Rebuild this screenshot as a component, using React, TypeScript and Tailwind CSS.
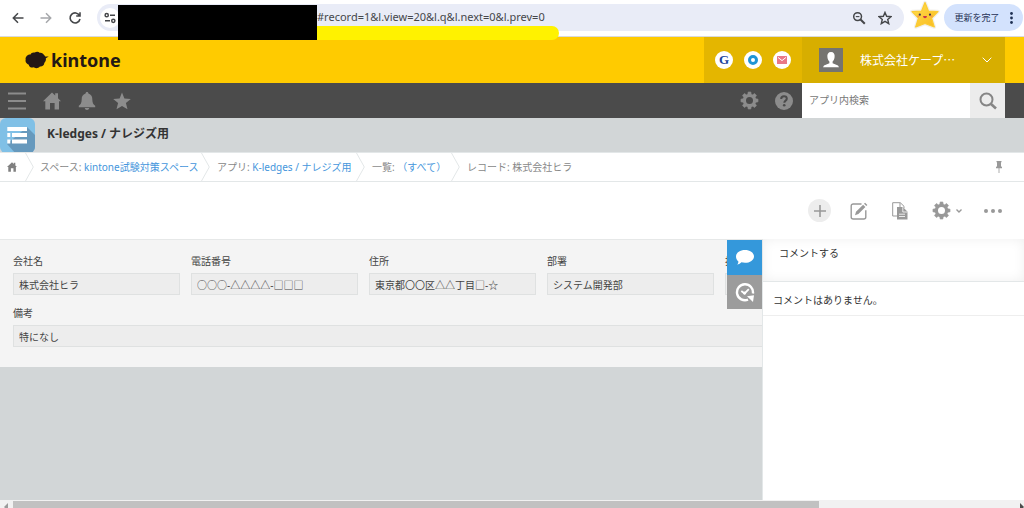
import React from "react";

type IconProps = { className?: string };

const HomeIcon = ({ className }: IconProps) => (
  <svg viewBox="0 0 18 18" className={className} fill="currentColor" aria-hidden="true">
    <path d="M9 .6 12.200 3.600V1.200h2.800v5L18 9.200h-2V17.500h-4.400v-6.400H7V17.500H2.300V9.200H0z" />
  </svg>
);

const GearIcon = ({ className }: IconProps) => (
  <svg viewBox="0 0 20 20" className={className} fill="none" stroke="currentColor" aria-hidden="true">
    <circle cx="10" cy="10" r="5.300" strokeWidth="3.200" />
    {[0, 45, 90, 135, 180, 225, 270, 315].map((a) => (
      <path key={a} d="M8 4.200 8.600 1h2.800l.6 3.200z" fill="currentColor" strokeWidth="0.600" transform={`rotate(${a} 10 10)`} />
    ))}
  </svg>
);

const StarShape = ({ className }: IconProps) => (
  <svg viewBox="0 0 18 18" className={className} fill="currentColor" aria-hidden="true">
    <path d="M9 .5 11.400 6.500 17.800 7 12.900 11.100 14.500 17.300 9 13.900 3.500 17.300 5.100 11.100.2 7 6.600 6.500z" />
  </svg>
);

const AppIcon = () => (
  <svg viewBox="0 0 35 35" className="size-[35px] shrink-0" aria-hidden="true">
    <defs>
      <clipPath id="appTile">
        <rect width="35" height="35" rx="6" />
      </clipPath>
    </defs>
    <g clipPath="url(#appTile)">
      <rect width="35" height="35" fill="#80c0e6" />
      <path d="M27 9 37 19V36H16L7 26z" fill="#6699bd" />
    </g>
    <g fill="#fff">
      <path d="M7.300 9h19.700v4H7.300zM7.300 15h3v4h-3zM12 15H27v4H12zM7.300 21.500h3v4h-3zM12 21.500H27v4H12z" />
    </g>
  </svg>
);

const ChevronDivider = () => (
  <svg viewBox="0 0 9 28" className="h-7 w-[9px] shrink-0" fill="none" stroke="#e3e7e8" aria-hidden="true">
    <path d="M.5 0 8.300 14 .5 28" />
  </svg>
);

const starPath = "M15 2.500 18.400 11 28 11.600 21.600 18.200 24.300 27 15 23.500 5.700 27 8.400 18.200 2 11.600 11.600 11z";

const SmilingStar = () => (
  <svg viewBox="0 0 30 30" className="size-[30px]" aria-hidden="true">
    <defs>
      <linearGradient id="starFill" x1="0" y1="0" x2="1" y2="1">
        <stop offset="0" stopColor="#ffe052" />
        <stop offset="1" stopColor="#f9b91c" />
      </linearGradient>
    </defs>
    <path d={starPath} fill="none" stroke="#f2f0ec" strokeWidth="3.500" strokeLinejoin="round" />
    <path d={starPath} fill="url(#starFill)" stroke="#fbcb32" strokeWidth="1.200" strokeLinejoin="round" />
    <circle cx="9.800" cy="14.700" r="1.100" fill="#3d3350" />
    <circle cx="20" cy="14.700" r="1.100" fill="#3d3350" />
    <path d="M13 16h4q-.3 2.200-2 2.200T13 16z" fill="#c9354a" />
    <circle cx="8.300" cy="16.300" r="1.100" fill="#f79a4e" />
    <circle cx="21.600" cy="16.300" r="1.100" fill="#f79a4e" />
  </svg>
);

function BrowserBar() {
  return (
    <div className="relative flex h-[37px] items-start border-b border-[#d9dadc] bg-white pt-1 text-[#45474a]">
      <div className="flex h-[27px] w-[97px] shrink-0 items-center gap-4 pl-3">
        <button aria-label="戻る">
          <svg viewBox="0 0 12 12" className="size-3" fill="none" stroke="currentColor" strokeWidth="1.500">
            <path d="M11.500 6H1.500M6 1.300 1.300 6 6 10.700" />
          </svg>
        </button>
        <button aria-label="進む" className="text-[#a5a7aa]">
          <svg viewBox="0 0 12 12" className="size-3" fill="none" stroke="currentColor" strokeWidth="1.500">
            <path d="M.5 6h10M6 1.300 10.700 6 6 10.700" />
          </svg>
        </button>
        <button aria-label="再読み込み">
          <svg viewBox="0 0 14 14" className="size-[14px]" fill="none" stroke="currentColor" strokeWidth="1.600">
            <path d="M11.500 4.500A5 5 0 1 0 12 8M12 1.300V5H8.200" />
          </svg>
        </button>
      </div>
      <div className="flex h-[27px] grow items-center rounded-full bg-[#e9ecf7] px-[3px]">
        <button aria-label="サイト情報" className="flex size-5 shrink-0 items-center justify-center rounded-full bg-white">
          <svg viewBox="0 0 12 12" className="size-3" fill="none" stroke="currentColor" strokeWidth="1.500">
            <circle cx="2.700" cy="3.200" r="1.600" />
            <path d="M6 3.200h5M1 8.800h5" />
            <circle cx="9.300" cy="8.800" r="1.600" />
          </svg>
        </button>
        <input
          aria-label="アドレス"
          readOnly
          className="ml-[197px] min-w-0 grow bg-transparent text-[11px] outline-none"
          value="#record=1&l.view=20&l.q&l.next=0&l.prev=0"
        />
        <button aria-label="ズーム" className="mr-3">
          <svg viewBox="0 0 14 14" className="size-[14px]" fill="none" stroke="currentColor" strokeWidth="1.500">
            <circle cx="5.600" cy="5.600" r="3.900" />
            <path d="m8.500 8.500 4.300 4.300" strokeWidth="2" />
            <path d="M3.800 5.600h3.600" strokeWidth="1.100" />
          </svg>
        </button>
        <button aria-label="ブックマーク" className="mr-[9px]">
          <svg viewBox="0 0 18 18" className="size-[14px]" fill="none" stroke="currentColor" strokeWidth="1.800">
            <path d="M9 1.800 11.100 6.800 16.700 7.300 12.500 10.900 13.800 16.300 9 13.400 4.200 16.300 5.500 10.900 1.300 7.300 6.900 6.800z" />
          </svg>
        </button>
      </div>
      <div className="-mt-1 ml-[6px] mr-1 shrink-0">
        <SmilingStar />
      </div>
      <button className="mr-px flex h-[27px] w-[79px] shrink-0 items-center justify-center gap-[10px] rounded-full bg-[#d3e2fd] text-[9px] text-[#1f3054]">
        更新を完了
        <svg viewBox="0 0 3 12" className="h-3 w-[3px]" fill="currentColor" aria-hidden="true">
          <circle cx="1.500" cy="1.500" r="1.400" />
          <circle cx="1.500" cy="6" r="1.400" />
          <circle cx="1.500" cy="10.500" r="1.400" />
        </svg>
      </button>
      <div className="absolute left-[118px] top-[26px] z-10 h-[14px] w-[441px] rounded-full bg-[#fff200]" />
      <div className="absolute left-[118px] top-[5px] z-10 h-[35px] w-[199px] bg-black" />
    </div>
  );
}

function BrandHeader() {
  return (
    <header className="flex h-[46px] items-stretch bg-[#ffcb00] pr-[19px]">
      <a href="#" className="flex grow items-center pl-[25px] text-[#231815]">
        <svg viewBox="0 0 24 18" className="h-[18px] w-6" fill="currentColor" aria-hidden="true">
          <path d="M5.500 3.500C6 1.700 8.200 1 9.800 1.600c1.500-1.200 3.800-1 4.800.2 1.900-.4 3.900.5 4.400 2.300.5.300.8.800 1.100 1.300l3.700.1-3 1.700c.4 1.900-.2 3.600-1.500 4.700.1 2.400-2.300 4-4.400 3.600-1.500 1.900-4.700 2.100-6.400.8-2.100.9-4.500-.4-4.700-2.600C1.400 13 0 10.800.7 8.800-.1 6.100 2.600 3.300 5.500 3.500z" />
        </svg>
        <span className="ml-[2px] text-[18px] font-bold leading-6">kintone</span>
      </a>
      <nav className="flex w-[98px] items-center gap-[11px] bg-[#e4b600] pl-[11px]" aria-label="サービス">
        <a href="#" aria-label="Garoon" className="flex size-[18px] items-center justify-center rounded-full bg-white font-['Liberation_Serif',serif] text-[13px] font-bold text-[#21439c]">
          G
        </a>
        <a href="#" aria-label="Office" className="flex size-[18px] items-center justify-center rounded-full bg-white">
          <span className="size-[10px] rounded-full border-3 border-[#1f95d6]" />
        </a>
        <a href="#" aria-label="メールワイズ" className="flex size-[18px] items-center justify-center rounded-full bg-white">
          <svg viewBox="0 0 10 8" className="h-2 w-[10px]">
            <rect width="10" height="8" rx="0.500" fill="#e97886" />
            <path d="m1 1.400 4 3.200 4-3.200" fill="none" stroke="#fff" />
          </svg>
        </a>
      </nav>
      <button className="flex w-[203px] items-center bg-[#d7ae00] pl-[17px] text-xs text-white">
        <svg viewBox="0 0 24 24" className="size-6">
          <rect width="24" height="24" fill="#757470" />
          <path d="M12 4c-2.700 0-4 2-3.600 5 .2 2.200 1 3.700 2 4.600v1.600L5 17.400 4 19.300h16l-1-1.900-5.400-2.200v-1.600c1-.9 1.800-2.400 2-4.600.4-3-.9-5-3.600-5z" fill="#fff" />
        </svg>
        <span className="ml-[17px] whitespace-nowrap font-['Noto_Sans_CJK_JP',sans-serif]">株式会社ケープ…</span>
        <svg viewBox="0 0 10 6" className="ml-auto mr-[13px] h-[6px] w-[10px]" fill="none" stroke="currentColor">
          <path d="m.7.7 4.300 4.300L9.300.7" />
        </svg>
      </button>
    </header>
  );
}

function GlobalNav() {
  return (
    <nav className="flex h-[35px] items-stretch bg-[#4b4b4b] pr-[19px] text-[#8c8c8c]" aria-label="グローバル">
      <div className="flex grow items-center gap-[17px] pl-2">
        <button aria-label="メニュー">
          <svg viewBox="0 0 18 18" className="size-[18px]" stroke="currentColor" strokeWidth="2">
            <path d="M0 1.500h18M0 9h18M0 16.500h18" />
          </svg>
        </button>
        <button aria-label="ポータル">
          <HomeIcon className="size-[18px]" />
        </button>
        <button aria-label="通知">
          <svg viewBox="0 0 18 18" className="size-[18px]" fill="currentColor">
            <path d="M9 0c-1 0-1.400.7-1.400 1.600C4.700 2.500 3.700 4.700 3.700 7.300c0 3.600-1.100 5.300-2.900 6.400v1.600h16.400v-1.600c-1.800-1.100-2.900-2.800-2.900-6.400 0-2.600-1-4.800-3.900-5.700C10.400.7 10 0 9 0zM6.700 16c.3 1.300 1.100 2 2.300 2s2-.7 2.300-2z" />
          </svg>
        </button>
        <button aria-label="ブックマーク一覧">
          <StarShape className="size-[18px]" />
        </button>
      </div>
      <div className="flex items-center gap-4 pr-[9px]">
        <button aria-label="設定">
          <GearIcon className="size-[19px]" />
        </button>
        <button aria-label="ヘルプ">
          <svg viewBox="0 0 18 18" className="size-[18px]">
            <circle cx="9" cy="9" r="9" fill="currentColor" />
            <path d="M6.200 7c0-1.700 1.100-2.700 2.800-2.700s2.800 1 2.800 2.400c0 1.900-2.500 2-2.500 4" fill="none" stroke="#4b4b4b" strokeWidth="2" />
            <circle cx="9.200" cy="13.300" r="1.300" fill="#4b4b4b" />
          </svg>
        </button>
      </div>
      <div className="flex w-[203px] bg-white">
        <input
          aria-label="アプリ内検索"
          placeholder="アプリ内検索"
          className="min-w-0 grow px-[7px] text-[10px] placeholder:text-[#777] outline-none"
        />
        <button aria-label="検索" className="flex w-[35px] shrink-0 items-center justify-center bg-[#ececec] text-[#858585]">
          <svg viewBox="0 0 18 18" className="size-[18px]" fill="none" stroke="currentColor" strokeWidth="2">
            <circle cx="7.500" cy="7.500" r="6" />
            <path d="m12 12 5 4.500" strokeWidth="2.600" />
          </svg>
        </button>
      </div>
    </nav>
  );
}

function Breadcrumbs() {
  return (
    <nav className="flex h-[30px] items-center border-y border-[#e3e7e8] bg-white text-[10px] text-[#888]" aria-label="パンくず">
      <a href="#" aria-label="ポータル" className="w-[25px] shrink-0 pl-[7px] text-[#808080]">
        <HomeIcon className="size-[10px]" />
      </a>
      <ChevronDivider />
      <span className="w-[167px] shrink-0 whitespace-nowrap pl-[6px]">
        スペース: <a href="#" className="text-[#4596dc]">kintone試験対策スペース</a>
      </span>
      <ChevronDivider />
      <span className="w-[146px] shrink-0 whitespace-nowrap pl-[7px]">
        アプリ: <a href="#" className="text-[#4596dc]">K-ledges / ナレジズ用</a>
      </span>
      <ChevronDivider />
      <span className="w-[86px] shrink-0 whitespace-nowrap pl-[7px]">
        一覧: <a href="#" className="text-[#4596dc]">（すべて）</a>
      </span>
      <ChevronDivider />
      <span className="grow pl-[7px]">レコード: 株式会社ヒラ</span>
      <button aria-label="固定" className="mr-[22px] text-[#999]">
        <svg viewBox="0 0 6 12" className="h-3 w-[6px]" fill="currentColor">
          <path d="M.5 0h5v1.200H5V5.300l1 .6v1.400H3.400V12h-.8V7.300H0V5.900l1-.6V1.200H.5z" />
        </svg>
      </button>
    </nav>
  );
}

function RecordToolbar() {
  return (
    <div className="flex h-[57px] items-center justify-end pr-[22px] text-[#999]">
      <button aria-label="レコードを追加" className="mr-[19px] flex size-[23px] items-center justify-center rounded-full bg-[#ededed]">
        <svg viewBox="0 0 12 12" className="size-3" stroke="currentColor" strokeWidth="1.600">
          <path d="M6 0v12M0 6h12" />
        </svg>
      </button>
      <button aria-label="編集" className="mr-6">
        <svg viewBox="0 0 18 18" className="size-[18px]" fill="none" stroke="currentColor" strokeWidth="1.400">
          <path d="M11.500 2H3.200A2 2 0 0 0 1.200 4v11a2 2 0 0 0 2 2h10.600a2 2 0 0 0 2-2V8.300" />
          <path d="M5 13.200 6 9.800 13.100 2.700l2.300 2.200-7 7.100zM14 1.800l1.100-1.100 2.300 2.200L16.300 4z" fill="currentColor" stroke="none" />
        </svg>
      </button>
      <button aria-label="再利用" className="mr-6">
        <svg viewBox="0 0 16 18" className="h-[18px] w-4">
          <path d="M5 14H.7V.7h7.600L12 4.300V6M8 1v4" fill="none" stroke="currentColor" />
          <path d="M5 5h6l4.500 4.700V17.500H5z" fill="currentColor" />
          <path d="M10.800 5.200V10h4.500M7 12.200h6M7 14.500h6" fill="none" stroke="#fff" strokeWidth="0.800" />
        </svg>
      </button>
      <button aria-label="アプリの設定" className="mr-[22px] flex items-center gap-[5px]">
        <GearIcon className="size-[19px]" />
        <svg viewBox="0 0 6 4" className="h-1 w-[6px]" fill="none" stroke="currentColor" strokeWidth="1.400">
          <path d="m.5.5 2.500 2.500L5.500.5" />
        </svg>
      </button>
      <button aria-label="その他">
        <svg viewBox="0 0 18 4" className="h-1 w-[18px]" fill="currentColor">
          <circle cx="2" cy="2" r="2" />
          <circle cx="9" cy="2" r="2" />
          <circle cx="16" cy="2" r="2" />
        </svg>
      </button>
    </div>
  );
}

function Field({ id, label, value, wide }: { id: string; label: string; value: string; wide?: boolean }) {
  return (
    <div className={wide ? "w-[900px]" : "w-[167px] shrink-0"}>
      <label htmlFor={id} className="block h-5 text-[10px] leading-4">
        {label}
      </label>
      <input
        id={id}
        readOnly
        value={value}
        className="block h-[22px] w-full border border-[#dfe1e1] bg-[#ededed] px-[5px] text-[10px] outline-none"
      />
    </div>
  );
}

const fields = [
  { id: "company", label: "会社名", value: "株式会社ヒラ" },
  { id: "phone", label: "電話番号", value: "○○○-△△△△-□□□" },
  { id: "address", label: "住所", value: "東京都〇〇区△△丁目□-☆" },
  { id: "department", label: "部署", value: "システム開発部" },
  { id: "person", label: "担当者", value: "" },
];

function RecordBody() {
  return (
    <main className="flex grow">
      <div className="relative min-w-0 grow bg-[#d2d6d7]">
        <div className="h-[128px] overflow-hidden border-t border-[#e6e8e8] bg-[#f4f4f4] pl-[13px] pt-[13px] text-[#444]">
          <div className="mb-[10px] flex gap-[11px]">
            {fields.map((f) => (
              <Field key={f.id} {...f} />
            ))}
          </div>
          <Field id="notes" label="備考" value="特になし" wide />
        </div>
        <div className="absolute right-0 top-px w-[35px] text-white">
          <button aria-label="コメント" className="flex h-[35px] w-full items-center justify-center bg-[#3498db]">
            <svg viewBox="0 0 18 15" className="h-[15px] w-[18px]" fill="currentColor">
              <path d="M9 0c5 0 9 2.800 9 6.400s-4 6.400-9 6.400c-1.300 0-2.500-.2-3.600-.5C4.400 13.500 3 14.300 1 14.500c1-.9 1.400-1.900 1.400-3.100C.9 10.200 0 8.400 0 6.400 0 2.800 4 0 9 0z" />
            </svg>
          </button>
          <button aria-label="変更履歴" className="flex h-[34px] w-full items-center justify-center bg-[#9c9c9c]">
            <svg viewBox="0 0 20 20" className="size-5" fill="none" stroke="currentColor" strokeWidth="2.400">
              <path d="M17.900 11.500A8 8 0 1 0 13 17.700" />
              <path d="m6.300 9 3.300 2.500 4.200-4.300" strokeWidth="1.800" />
              <circle cx="9.600" cy="11" r="1.600" fill="currentColor" stroke="none" />
              <path d="M12 14.200 19 13.200 18 20z" fill="currentColor" stroke="none" />
            </svg>
          </button>
        </div>
      </div>
      <aside className="w-[262px] shrink-0 border-l border-[#e3e7e8] bg-white text-[10px] text-[#333]">
        <button className="block h-[43px] w-full border-b border-[#e3e7e8] bg-white px-4 pb-[14px] text-left shadow-[inset_0_0_12px_#efefef]">
          コメントする
        </button>
        <p className="flex h-[34px] items-center border-b border-[#eeeeee] pl-[10px] pt-1">コメントはありません。</p>
      </aside>
    </main>
  );
}

function BottomScroll() {
  return (
    <div className="flex h-2 items-stretch overflow-hidden bg-[#f1f1f1] pt-px" aria-hidden="true">
      <svg viewBox="0 0 13 7" className="h-[7px] w-[13px] shrink-0">
        <path d="M8 2v8L4 6z" fill="#9b9b9b" />
      </svg>
      <div className="w-[806px] bg-[#c1c1c1]" />
      <svg viewBox="0 0 5 7" className="ml-auto h-[7px] w-[5px]">
        <path d="M1 2v8l4-4z" fill="#4d4d4d" />
      </svg>
    </div>
  );
}

export default function App() {
  return (
    <div className="flex min-h-screen flex-col overflow-hidden bg-white font-['Noto_Sans','Noto_Sans_CJK_JP',sans-serif]">
      <BrowserBar />
      <BrandHeader />
      <GlobalNav />
      <div className="flex h-[34px] items-start bg-[#d2d6d7]">
        <AppIcon />
        <h1 className="pl-3 text-xs font-bold leading-8 text-[#333]">K-ledges / ナレジズ用</h1>
      </div>
      <Breadcrumbs />
      <RecordToolbar />
      <RecordBody />
      <BottomScroll />
    </div>
  );
}
